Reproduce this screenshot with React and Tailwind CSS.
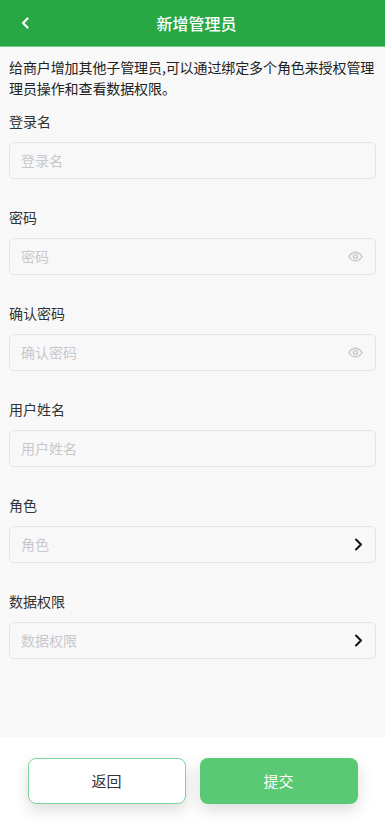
import React from 'react';

const font = { fontFamily: '"Noto Sans CJK SC", "Noto Sans", sans-serif' };

function EyeIcon() {
  return (
    <svg width="15" height="15" viewBox="0 0 24 24" fill="none" stroke="#c9c9cf" strokeWidth="2.4" strokeLinecap="round" strokeLinejoin="round">
      <path d="M1.5 12s4-7 10.5-7 10.5 7 10.5 7-4 7-10.5 7S1.5 12 1.5 12z" />
      <circle cx="12" cy="12" r="3.2" />
    </svg>
  );
}

function Chevron() {
  return (
    <svg width="9" height="13" viewBox="0 0 9 13" fill="none" stroke="#111" strokeWidth="2" strokeLinecap="round" strokeLinejoin="round">
      <path d="M2 1.5l5 5-5 5" />
    </svg>
  );
}

function Field({ label, icon }) {
  return (
    <div className="pb-[28px]">
      <div className="h-[20px] leading-[20px] text-[14px] text-[#333] mb-[11px]">{label}</div>
      <div className="h-[37px] rounded-[5px] border border-[#e4e4ea] bg-[#f8f8f9] flex items-center pl-[11px] pr-[12px]">
        <span className="flex-1 text-[14px] text-[#c8c8cc]">{label}</span>
        {icon === 'eye' && <EyeIcon />}
        {icon === 'arrow' && <Chevron />}
      </div>
    </div>
  );
}

export default function App() {
  return (
    <div className="w-[385px] h-[837px] flex flex-col bg-[#f8f8f8]" style={font}>
      <div className="h-[47px] bg-[#28a745] border-b border-[#6fce88] flex items-center relative shrink-0">
        <div className="w-[50px] flex justify-center">
          <svg width="9" height="12" viewBox="0 0 9 12" fill="none" stroke="#fff" strokeWidth="2.2" strokeLinecap="round" strokeLinejoin="round">
            <path d="M6.5 1.5L2 6l4.5 4.5" />
          </svg>
        </div>
        <div className="flex-1 text-center text-white text-[16px] font-medium pr-[42px]">新增管理员</div>
      </div>
      <div className="flex-1 px-[9px]">
        <div className="pt-[10px] text-[14px] leading-[21px] text-[#222] whitespace-nowrap tracking-[-0.1px]">
          给商户增加其他子管理员,可以通过绑定多个角色来授权管理
          <br />
          理员操作和查看数据权限。
        </div>
        <div className="pt-[12px]">
          <Field label="登录名" />
          <Field label="密码" icon="eye" />
          <Field label="确认密码" icon="eye" />
          <Field label="用户姓名" />
          <Field label="角色" icon="arrow" />
          <Field label="数据权限" icon="arrow" />
        </div>
      </div>
      <div className="h-[100px] bg-white shrink-0 flex items-start justify-center gap-[14px] pt-[21px]">
        <button className="w-[158px] h-[46px] rounded-[8px] border border-[#7ed69a] bg-white text-[15px] text-[#333] shadow-[0_6px_16px_rgba(0,0,0,0.14)]">
          返回
        </button>
        <button className="w-[158px] h-[46px] rounded-[8px] bg-[#5ac974] text-[15px] text-white shadow-[0_6px_16px_rgba(0,0,0,0.14)]">
          提交
        </button>
      </div>
    </div>
  );
}
